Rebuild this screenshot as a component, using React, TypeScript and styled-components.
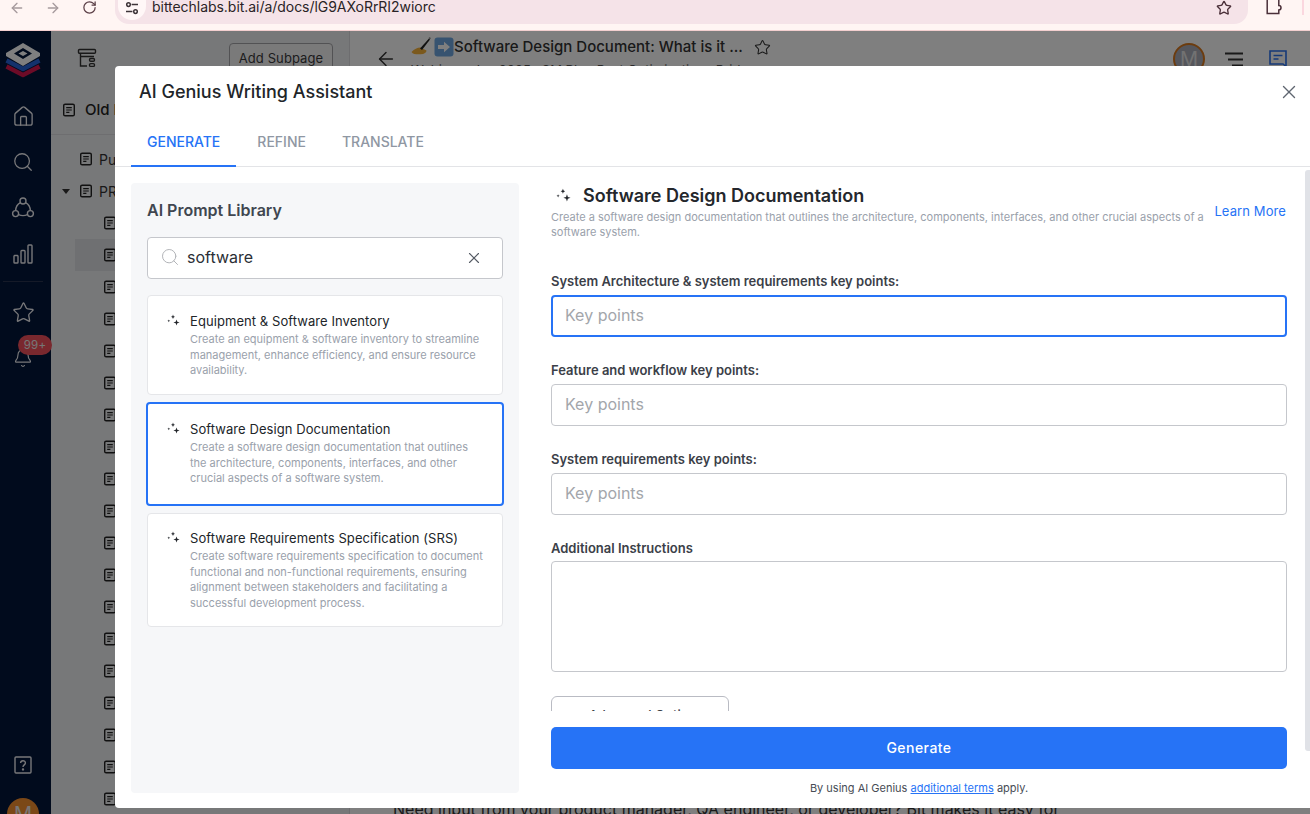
import React from "react";
import styled, { createGlobalStyle } from "styled-components";
import { ArrowLeft, ArrowRight, RotateCw, Star, Home, Search, Bell, X } from "lucide-react";

const Global = createGlobalStyle`
  html, body { margin: 0; padding: 0; height: 100%; overflow: hidden; background: #fff; }
  * { box-sizing: border-box; }
  body { font-family: Inter, "Noto Sans", "Liberation Sans", sans-serif; }
`;

const Page = styled.div`
  width: 1310px; height: 814px; display: flex; flex-direction: column; overflow: hidden;
`;

/* Browser chrome */
const BrowserBar = styled.div`
  height: 31px; flex: none; background: #fff5f3; border-bottom: 1px solid #f3cfcf;
  display: flex; align-items: flex-start; color: #5b4a50; overflow: hidden;
`;
const NavButton = styled.span<{ $muted?: boolean }>`
  width: 36px; height: 15px; display: flex; justify-content: center; align-items: center;
  color: ${p => (p.$muted ? "#a69a9d" : "#5b3f47")};
`;
const NavGroup = styled.div`
  width: 115px; flex: none; display: flex; padding-left: 0; margin-left: -1px;
`;
const UrlPill = styled.div`
  width: 1133px; height: 24px; flex: none; margin-left: 1px; background: #f5e3e8;
  border-radius: 0 0 14px 14px; display: flex; align-items: flex-start; padding-left: 3px; position: relative;
`;
const SiteInfo = styled.span`
  width: 28px; height: 20px; background: #fff7f7; border-radius: 0 0 14px 14px; display: flex;
  justify-content: center; align-items: flex-start; color: #3d3438;
`;
const UrlText = styled.span`
  margin-left: 6px; font-size: 14px; line-height: 14px; color: #2a2326; letter-spacing: -0.04px;
`;
const UrlStar = styled.span`
  margin-left: auto; margin-right: 16px; display: flex; color: #4a2f38;
`;
const ExtButton = styled.span`
  margin-left: 18px; display: flex; color: #4a2f38;
`;
const ProfileEdge = styled.span`
  margin-left: 19px; width: 2px; height: 15px; background: #fbd7df;
`;

/* App behind the modal */
const AppArea = styled.div`
  position: relative; flex: 1; display: flex; overflow: hidden; background: #fff;
`;
const Rail = styled.nav`
  width: 51px; flex: none; background: #02163a; display: flex; flex-direction: column;
  align-items: center; color: #fff; padding: 11px 5px 0 0; position: relative; z-index: 0;
`;
const RailItem = styled.span<{ $mt?: number }>`
  display: flex; justify-content: center; align-items: center; height: 24px;
  margin-top: ${p => p.$mt ?? 22}px; color: #f0f0f4;
`;
const RailRule = styled.hr`
  width: 40px; border: 0; border-top: 1px solid #2a3550; margin: 15px 0 0;
`;
const BellWrap = styled.span`
  position: relative; display: flex; margin-top: 22px; height: 24px; align-items: center; color: #f0f0f4;
`;
const Badge = styled.span`
  position: absolute; left: 5px; top: -11px; width: 34px; height: 20px; border-radius: 10px;
  background: #f2505c; color: #ededed; font-size: 11.5px; display: flex; align-items: center;
  justify-content: center; letter-spacing: 0.2px;
`;
const RailSpacer = styled.div` flex: 1; `;
const RailAvatar = styled.span`
  width: 32px; height: 32px; border-radius: 50%; background: #f7902f; color: #eee; font-size: 20px;
  display: flex; justify-content: center; align-items: center; margin: 21px 0 -16px;
`;

const Sidebar = styled.aside`
  width: 299px; flex: none; background: #eff0f2; border-right: 1px solid #dadbde; display: flex; flex-direction: column;
`;
const SideTop = styled.div`
  height: 48px; flex: none; display: flex; align-items: center; padding: 6px 16px 0 26px; justify-content: space-between;
  color: #333;
`;
const AddSubpage = styled.button`
  width: 104px; height: 30px; border: 1px solid #a4a4a8; border-radius: 4px; background: #f5f5f5;
  font: 400 13px Inter, sans-serif; letter-spacing: 0.1px; color: #3a3a3c; padding: 0; margin-top: 6px; align-self: flex-start;
`;
const SideHead = styled.div`
  height: 56px; flex: none; border-bottom: 1px solid #dcdde0; display: flex; align-items: center;
  padding: 6px 0 0 11px; gap: 9px; font-size: 15px; font-weight: 500; color: #222;
`;
const TreeRow = styled.div<{ $depth: number; $active?: boolean; $mt?: number }>`
  height: 32px; flex: none; display: flex; align-items: center; gap: 6px; font-size: 14px; color: #333;
  padding-left: ${p => p.$depth}px;
  margin-left: ${p => (p.$active ? 24 : 0)}px;
  margin-top: ${p => p.$mt ?? 0}px;
  ${p => p.$active && `padding-left: ${p.$depth - 24}px; background: #dfe0e4;`}
`;
const Caret = styled.span`
  width: 0; height: 0; border-left: 4px solid transparent; border-right: 4px solid transparent;
  border-top: 5px solid #333; margin-left: -17px; margin-right: 3px;
`;

const Main = styled.main`
  flex: 1; position: relative; background: #fff; overflow: hidden; display: flex; flex-direction: column;
`;
const DocHeader = styled.header`
  height: 68px; display: flex; align-items: flex-start; padding: 5px 0 0 25px; flex: none;
`;
const BackSlot = styled.span`
  display: flex; margin-top: 12px; color: #333;
`;
const DocTitleWrap = styled.div`
  margin-left: 14px; display: flex; flex-direction: column; width: 373px;
`;
const DocTitleRow = styled.div`
  display: flex; align-items: center; font-size: 15px; font-weight: 500; color: #333; line-height: 22px; white-space: nowrap;
`;
const TitleStar = styled.span`
  display: flex; margin-left: 11px;
`;
const DocMeta = styled.div`
  font-size: 13px; color: #555; line-height: 16px; margin-top: 4px; white-space: nowrap;
`;
const DocIcons = styled.div`
  margin-left: auto; display: flex; align-items: center; gap: 26px; padding-right: 23px; margin-top: 7px; color: #333;
`;
const DocAvatar = styled.span`
  width: 32px; height: 32px; border-radius: 50%; background: #aaacb8; border: 2px solid #d9791f; color: #e5e5e5;
  display: flex; justify-content: center; align-items: center; font-size: 20px; margin-right: -6px;
`;
const DocBodyLine = styled.p`
  position: absolute; left: 43px; top: 768px; margin: 0; font-size: 16px; color: #333; white-space: nowrap;
`;

const Backdrop = styled.div`
  position: absolute; inset: 0; background: rgba(0,0,0,0.5);
`;

/* Modal */
const Modal = styled.section`
  position: absolute; left: 115px; top: 35px; width: 1195px; height: 742px; background: #fff;
  border-radius: 4px 0 0 4px; display: flex; flex-direction: column; overflow: hidden;
`;
const ModalHead = styled.div`
  height: 55px; flex: none; display: flex; align-items: center; justify-content: space-between; padding: 0 10px 4px 24px;
`;
const ModalTitle = styled.h2`
  margin: 0; font-size: 18px; font-weight: 500; color: #212529; line-height: 24px;
`;
const CloseBtn = styled.span` display: flex; color: #5f6670; `;
const Tabs = styled.div`
  height: 46px; flex: none; border-bottom: 1px solid #e3e4e7; display: flex; padding-left: 16px;
`;
const Tab = styled.div<{ $active?: boolean }>`
  height: 46px; padding: 12px 16px 0; font-size: 14px; font-weight: 500; line-height: 17px;
  margin-right: ${p => (p.$active ? 5 : 4)}px;
  color: ${p => (p.$active ? "#2673f6" : "#8f97a3")};
  border-bottom: 2px solid ${p => (p.$active ? "#2673f6" : "transparent")};
`;
const Body = styled.div`
  flex: 1; min-height: 0; display: flex; padding: 16px 0 15px 16px; position: relative;
`;
const Library = styled.div`
  width: 388px; flex: none; background: #f6f7f9; border-radius: 4px; padding: 17px 16px;
  display: flex; flex-direction: column;
`;
const LibraryTitle = styled.h3`
  margin: 0 0 17px; font-size: 16px; line-height: 20px; font-weight: 600; color: #404650;
`;
const SearchBox = styled.div`
  height: 42px; flex: none; background: #fff; border: 1px solid #c5c7cc; border-radius: 4px; display: flex;
  align-items: center; padding: 0 19px 2px 12px; color: #b2b4b8; margin-bottom: 16px;
`;
const SearchValue = styled.span`
  flex: 1; margin-left: 7px; font-size: 16px; color: #2b2f36;
`;
const ClearIcon = styled.span` display: flex; color: #555b64; margin-top: 1px; `;
const PromptCard = styled.div<{ $selected?: boolean; $h: number; $mt: number; $pt: number }>`
  height: ${p => p.$h}px; flex: none; margin-top: ${p => p.$mt}px; background: #fff; border-radius: 4px;
  border: ${p => (p.$selected ? "2px solid #2673f6" : "1px solid #e5e6e9")};
  margin-left: ${p => (p.$selected ? -1 : 0)}px; margin-right: ${p => (p.$selected ? -1 : 0)}px;
  padding: ${p => p.$pt}px 12px 0 19px;
  display: flex; gap: 10px;
`;
const SparkSlot = styled.span` flex: none; width: 13px; margin-top: 2px; color: #23262b; `;
const PromptTitle = styled.div`
  font-size: 13px; line-height: 18px; color: #212529; font-weight: 400; white-space: nowrap; letter-spacing: 0.07px;
`;
const PromptDesc = styled.div`
  font-size: 11px; line-height: 15.5px; color: #9aa1ab; margin-top: 2px; white-space: pre-line;
`;
const Form = styled.div`
  flex: 1; min-width: 0; display: flex; flex-direction: column; padding: 0 23px 0 32px;
`;
const FormScroll = styled.div`
  height: 528px; flex: none; overflow: hidden;
`;
const FormHead = styled.div`
  display: flex; align-items: center; gap: 12px; height: 26px; font-size: 18px; font-weight: 600; color: #24272c; padding: 0 0 2px 5px;
`;
const FormIntro = styled.div`
  display: flex; align-items: flex-start; justify-content: space-between; margin-top: 1px;
`;
const FormDesc = styled.p`
  margin: 0; font-size: 11px; line-height: 14.5px; color: #9aa1ab; width: 660px; white-space: pre-line;
`;
const LearnMore = styled.a`
  font-size: 13px; line-height: 16px; color: #2673f6; margin-right: 1px; letter-spacing: 0.1px; margin-top: -7px;
`;
const FieldLabel = styled.label<{ $mt: number; $mb?: number }>`
  display: block; margin-top: ${p => p.$mt}px; margin-bottom: ${p => p.$mb ?? 5}px; font-size: 13px; line-height: 18px; font-weight: 600; color: #3b4048;
`;
const KeyInput = styled.div<{ $focus?: boolean }>`
  height: 42px; border-radius: 4px; background: #fff; display: flex; align-items: center;
  font-size: 16px; color: #a3a6ab; padding-bottom: 2px;
  border: ${p => (p.$focus ? "2px solid #2673f6" : "1px solid #c5c7cc")};
  padding-left: ${p => (p.$focus ? 12 : 13)}px;
`;
const InstructionBox = styled.div`
  height: 111px; border: 1px solid #c5c7cc; border-radius: 4px; background: #fff;
`;
const AdvancedBtn = styled.button`
  width: 178px; height: 38px; display: block; margin-top: 24px; border: 1px solid #b9bbc3; border-radius: 6px; background: #fff;
  font: 500 13px Inter, sans-serif; color: #3b4048;
`;
const GenerateBtn = styled.button`
  height: 42px; flex: none; margin-top: 16px; background: #2673f6; color: #fff; border: 0; border-radius: 5px;
  font: 500 14px Inter, sans-serif; letter-spacing: 0.45px; padding: 0 0 2px;
`;
const Terms = styled.p`
  margin: 12px 0 0; text-align: center; font-size: 11px; line-height: 14px; color: #474c55;
`;
const TermsLink = styled.a` color: #2673f6; text-decoration: underline; `;
const ScrollThumb = styled.span`
  position: absolute; right: 0; top: 3px; width: 5px; height: 581px; background: #e0e2e7; border-radius: 3px 0 0 3px;
`;

const Spark = ({ size = 13 }: { size?: number }) => (
  <svg width={size} height={size} viewBox="0 0 13 13" fill="currentColor" style={{ display: "block" }}>
    <path d="M6 0.6 6.6 2.2 8 2.8 6.6 3.4 6 5 5.4 3.4 4 2.8 5.4 2.2Z" />
    <path d="M9.5 5.4 10.3 7.7 12.6 8.5 10.3 9.3 9.5 11.6 8.7 9.3 6.4 8.5 8.7 7.7Z" />
    <path d="M1.8 5.4 2.2 6.4 3.2 6.8 2.2 7.2 1.8 8.2 1.4 7.2 0.4 6.8 1.4 6.4Z" />
  </svg>
);
const DocIcon = () => (
  <svg width="14" height="14" viewBox="0 0 14 14" fill="none" stroke="#222" strokeWidth="1.4" style={{ flex: "none" }}>
    <rect x="1.7" y="1.2" width="10.6" height="11.6" rx="1.4" />
    <path d="M4.2 4.6h5.6M4.2 7h5.6M4.2 9.4h3.2" strokeWidth="1.1" />
  </svg>
);
const Logo = () => (
  <svg width="36" height="36" viewBox="0 0 36 36" style={{ display: "block" }}>
    <path d="M1.5 24.5 18 33 34.5 24.5" fill="none" stroke="#d8174f" strokeWidth="4.4" strokeLinejoin="round" />
    <path d="M1.5 18.5 18 27 34.5 18.5" fill="none" stroke="#2764d8" strokeWidth="4.4" strokeLinejoin="round" />
    <path d="M18 1 35 11 35 14 18 24 1 14 1 11Z" fill="#fff" />
    <path d="M18 6 27 11.5 18 17 9 11.5Z" fill="#02163a" />
    <path d="M18 9 22.5 11.5 18 14 13.5 11.5Z" fill="#fff" />
  </svg>
);
const NetworkIcon = () => (
  <svg width="24" height="24" viewBox="0 0 24 24" fill="none" stroke="currentColor" strokeWidth="1.4">
    <circle cx="12" cy="5" r="3" /><circle cx="4.6" cy="17.6" r="3" /><circle cx="19.4" cy="17.6" r="3" />
    <path d="M9.4 6.6C6.6 8 4.8 10.8 4.6 14.6M14.6 6.6c2.8 1.4 4.6 4.2 4.8 8M7.6 18.6c3 1.4 5.8 1.4 8.8 0" />
  </svg>
);
const BarsIcon = () => (
  <svg width="20" height="22" viewBox="0 0 20 22" fill="none" stroke="currentColor" strokeWidth="1.4">
    <rect x="1" y="12.5" width="4" height="7.5" rx=".8" /><rect x="8" y="7.5" width="4" height="12.5" rx=".8" /><rect x="15" y="2" width="4" height="18" rx=".8" />
  </svg>
);
const HelpIcon = () => (
  <svg width="18" height="18" viewBox="0 0 18 18" fill="none" stroke="currentColor" strokeWidth="1.4">
    <rect x="1" y="1" width="16" height="16" rx="1" />
    <path d="M6.6 7c0-3 4.8-3 4.8 0 0 1.9-2.4 1.8-2.4 3.9" /><circle cx="9" cy="13.4" r=".5" />
  </svg>
);
const TreeIcon = () => (
  <svg width="20" height="20" viewBox="0 0 20 20" fill="none" stroke="currentColor" strokeWidth="1.4">
    <rect x="1.5" y="1.5" width="17" height="3.8" rx="1" /><path d="M3.5 5.3V18h6.5M3.5 8.5H17" /><rect x="12.5" y="10.5" width="5" height="2.8" rx="1.2" /><rect x="12.5" y="15.6" width="5" height="2.8" rx="1.2" />
  </svg>
);
const TuneIcon = () => (
  <svg width="16" height="16" viewBox="0 0 16 16" fill="none" stroke="currentColor" strokeWidth="1.5" style={{ marginTop: 1 }}>
    <circle cx="4.5" cy="3.6" r="1.8" /><path d="M7.6 3.6H14M2 10.6h6.4" /><circle cx="11.5" cy="10.6" r="1.8" />
  </svg>
);
const ExtensionIcon = () => (
  <svg width="17" height="15" viewBox="0 0 17 15" fill="none" stroke="currentColor" strokeWidth="1.5">
    <path d="M1.2 -2V13.6H12.8V10a1.8 1.8 0 0 0 0-4.4V-2" />
  </svg>
);
const WriteEmoji = () => (
  <svg width="20" height="20" viewBox="0 0 20 20" style={{ flex: "none" }}>
    <path d="M0.5 15c3-3 5.5-4.5 9-4.5l6 3c0 2-2 3.6-6 3.8-4 .2-7.5 0-9-2.3Z" fill="#f7b23b" />
    <path d="M9 11.5 18 1.5l1 1L11 13Z" fill="#222" />
    <path d="M17.5 1 19 0l.8 1.6-1 1Z" fill="#888" />
  </svg>
);
const ArrowEmoji = () => (
  <svg width="20" height="20" viewBox="0 0 20 20" style={{ flex: "none", marginLeft: 3 }}>
    <rect x="0.5" y="0.5" width="19" height="19" rx="3" fill="#6ea7e0" />
    <path d="M4 8h6V4.8L16 10l-6 5.2V12H4Z" fill="#fff" />
  </svg>
);
const MenuLines = () => (
  <svg width="18" height="15" viewBox="0 0 18 15" stroke="#333" strokeWidth="2" style={{ display: "block" }}>
    <path d="M0 1.5h18M3 7.5h15M7 13.5h11" />
  </svg>
);
const CommentIcon = () => (
  <svg width="18" height="18" viewBox="0 0 18 18" fill="none" stroke="#2a72f0" strokeWidth="1.6" style={{ display: "block" }}>
    <path d="M1 1h16v15.5l-3-2.5H1Z" /><path d="M4.5 5.5h9M4.5 9h5" />
  </svg>
);

const treeRows = Array.from({ length: 19 }, (_, i) => i);
const cards = [
  { h: 100, mt: 0, pt: 16, t: "Equipment & Software Inventory", d: "Create an equipment & software inventory to streamline\nmanagement, enhance efficiency, and ensure resource\navailability." },
  { h: 104, mt: 7, pt: 16, t: "Software Design Documentation", d: "Create a software design documentation that outlines\nthe architecture, components, interfaces, and other\ncrucial aspects of a software system.", sel: true },
  { h: 114, mt: 7, pt: 15, t: "Software Requirements Specification (SRS)", d: "Create software requirements specification to document\nfunctional and non-functional requirements, ensuring\nalignment between stakeholders and facilitating a\nsuccessful development process." },
];
const fields = [
  { l: "System Architecture & system requirements key points:", mt: 33, focus: true },
  { l: "Feature and workflow key points:", mt: 24 },
  { l: "System requirements key points:", mt: 24 },
];

export default function App() {
  return (
    <Page>
      <Global />
      <BrowserBar>
        <NavGroup>
          <NavButton $muted><ArrowLeft size={16} /></NavButton>
          <NavButton $muted><ArrowRight size={16} /></NavButton>
          <NavButton><RotateCw size={15} /></NavButton>
        </NavGroup>
        <UrlPill>
          <SiteInfo><TuneIcon /></SiteInfo>
          <UrlText>bittechlabs.bit.ai/a/docs/lG9AXoRrRI2wiorc</UrlText>
          <UrlStar><Star size={16} /></UrlStar>
        </UrlPill>
        <ExtButton><ExtensionIcon /></ExtButton>
        <ProfileEdge />
      </BrowserBar>
      <AppArea>
        <Rail>
          <Logo />
          <RailItem $mt={26}><Home size={23} strokeWidth={1.4} /></RailItem>
          <RailItem><Search size={22} strokeWidth={1.4} /></RailItem>
          <RailItem><NetworkIcon /></RailItem>
          <RailItem><BarsIcon /></RailItem>
          <RailRule />
          <RailItem $mt={18}><Star size={23} strokeWidth={1.4} /></RailItem>
          <BellWrap><Bell size={20} strokeWidth={1.4} /><Badge>99+</Badge></BellWrap>
          <RailSpacer />
          <RailItem><HelpIcon /></RailItem>
          <RailAvatar>M</RailAvatar>
        </Rail>
        <Sidebar>
          <SideTop><TreeIcon /><AddSubpage>Add Subpage</AddSubpage></SideTop>
          <SideHead><DocIcon />Old Pages</SideHead>
          <TreeRow $depth={28} $mt={8}><DocIcon />Public</TreeRow>
          <TreeRow $depth={28}><Caret /><DocIcon />PRD</TreeRow>
          {treeRows.map(i => (
            <TreeRow key={i} $depth={52} $active={i === 1}><DocIcon />Page</TreeRow>
          ))}
        </Sidebar>
        <Main>
          <DocHeader>
            <BackSlot><ArrowLeft size={22} strokeWidth={1.6} /></BackSlot>
            <DocTitleWrap>
              <DocTitleRow>
                <WriteEmoji /><ArrowEmoji />
                Software Design Document: What is it ...
                <TitleStar><Star size={17} strokeWidth={1.5} /></TitleStar>
              </DocTitleRow>
              <DocMeta>Webinar · Jan 2025 · SM Blog Post Optimization · Bridge</DocMeta>
            </DocTitleWrap>
            <DocIcons>
              <DocAvatar>M</DocAvatar>
              <MenuLines />
              <CommentIcon />
            </DocIcons>
          </DocHeader>
          <DocBodyLine>Need input from your product manager, QA engineer, or developer? Bit makes it easy for</DocBodyLine>
        </Main>
        <Backdrop />
        <Modal>
          <ModalHead>
            <ModalTitle>AI Genius Writing Assistant</ModalTitle>
            <CloseBtn><X size={22} strokeWidth={1.5} /></CloseBtn>
          </ModalHead>
          <Tabs>
            <Tab $active>GENERATE</Tab>
            <Tab>REFINE</Tab>
            <Tab>TRANSLATE</Tab>
          </Tabs>
          <Body>
            <ScrollThumb />
            <Library>
              <LibraryTitle>AI Prompt Library</LibraryTitle>
              <SearchBox>
                <Search size={20} strokeWidth={1.2} />
                <SearchValue>software</SearchValue>
                <ClearIcon><X size={18} strokeWidth={1.5} /></ClearIcon>
              </SearchBox>
              {cards.map(c => (
                <PromptCard key={c.t} $h={c.h} $mt={c.mt} $pt={c.pt} $selected={c.sel}>
                  <SparkSlot><Spark /></SparkSlot>
                  <div>
                    <PromptTitle>{c.t}</PromptTitle>
                    <PromptDesc>{c.d}</PromptDesc>
                  </div>
                </PromptCard>
              ))}
            </Library>
            <Form>
              <FormScroll>
                <FormHead><Spark size={15} />Software Design Documentation</FormHead>
                <FormIntro>
                  <FormDesc>{"Create a software design documentation that outlines the architecture, components, interfaces, and other crucial aspects of a\nsoftware system."}</FormDesc>
                  <LearnMore>Learn More</LearnMore>
                </FormIntro>
                {fields.map(f => (
                  <div key={f.l}>
                    <FieldLabel $mt={f.mt}>{f.l}</FieldLabel>
                    <KeyInput $focus={f.focus}>Key points</KeyInput>
                  </div>
                ))}
                <FieldLabel $mt={24} $mb={4}>Additional Instructions</FieldLabel>
                <InstructionBox />
                <AdvancedBtn>+ Advanced Options</AdvancedBtn>
              </FormScroll>
              <GenerateBtn>Generate</GenerateBtn>
              <Terms>By using AI Genius <TermsLink>additional terms</TermsLink> apply.</Terms>
            </Form>
          </Body>
        </Modal>
      </AppArea>
    </Page>
  );
}
